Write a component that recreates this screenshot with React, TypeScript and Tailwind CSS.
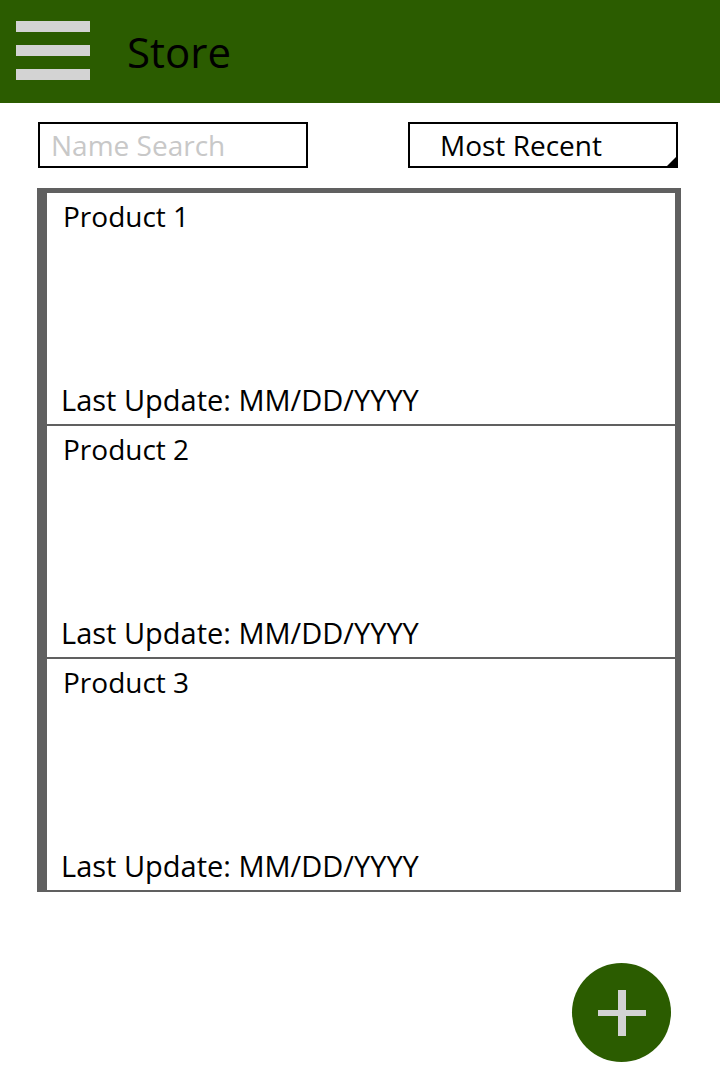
import React from "react";

const font = { fontFamily: '"Open Sans", "Noto Sans", sans-serif' };

function Item({ name }: { name: string }) {
  return (
    <div className="h-[233px] border-b-2 border-[#606060] flex flex-col justify-between pl-[14px] pt-[7px] pb-[8px]">
      <div className="text-[28px] leading-[32px] text-black pl-[2px]">{name}</div>
      <div className="text-[29px] leading-[32px] text-black">Last Update: MM/DD/YYYY</div>
    </div>
  );
}

export default function App() {
  return (
    <div className="w-[720px] h-[1080px] bg-white relative" style={font}>
      <header className="h-[103px] bg-[#2b5c00] flex items-center">
        <div className="ml-4 flex flex-col gap-[13px] -mt-[2px]">
          <div className="w-[74px] h-[11px] bg-[#d3d3d3]" />
          <div className="w-[74px] h-[11px] bg-[#d3d3d3]" />
          <div className="w-[74px] h-[11px] bg-[#d3d3d3]" />
        </div>
        <div className="ml-[37px] text-[42px] leading-none text-black mt-[1px]">Store</div>
      </header>

      <div className="flex justify-between pl-[38px] pr-[42px] mt-[19px]">
        <div className="w-[270px] h-[46px] border-2 border-black flex items-center pl-[11px] text-[28px] text-[#c8c8c8]">
          Name Search
        </div>
        <div className="relative w-[270px] h-[46px] border-2 border-black flex items-center pl-[30px] text-[28px] text-black">
          Most Recent
          <svg className="absolute right-0 bottom-0" width="9" height="9" viewBox="0 0 9 9">
            <polygon points="9,0 9,9 0,9" fill="#000" />
          </svg>
        </div>
      </div>

      <div className="ml-[37px] mt-[20px] w-[644px] border-l-[10px] border-t-[5px] border-r-[6px] border-[#606060]">
        <Item name="Product 1" />
        <Item name="Product 2" />
        <Item name="Product 3" />
      </div>

      <button className="absolute left-[572px] top-[963px] w-[99px] h-[99px] rounded-full bg-[#2b5c00] flex items-center justify-center">
        <svg width="48" height="46" viewBox="0 0 48 46">
          <rect x="0" y="20" width="48" height="6" fill="#d3d3d3" />
          <rect x="20" y="0" width="8" height="46" fill="#d3d3d3" />
        </svg>
      </button>
    </div>
  );
}
